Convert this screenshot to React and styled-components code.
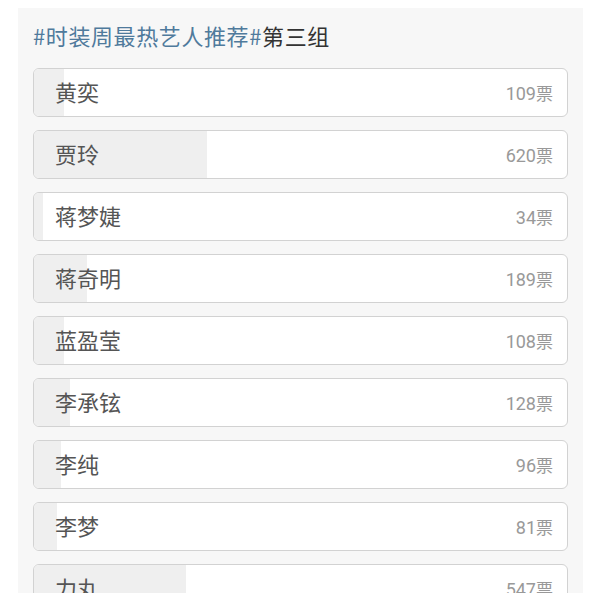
import React from 'react';
import styled, { createGlobalStyle } from 'styled-components';

const GlobalStyle = createGlobalStyle`
  html, body {
    margin: 0;
    padding: 0;
    background: #ffffff;
  }
  body {
    font-family: "Noto Sans CJK SC", "Noto Sans", sans-serif;
    overflow: hidden;
  }
`;

const Page = styled.div`
  padding: 8px 17px 0 18px;
  height: 593px;
  box-sizing: border-box;
`;

const Panel = styled.div`
  background: #f7f7f7;
  padding: 12px 15px 20px 15px;
  height: 100%;
  box-sizing: border-box;
`;

const Title = styled.div`
  font-size: 22px;
  line-height: 30px;
  color: #333333;
  margin-bottom: 18px;
  letter-spacing: 0.6px;
`;

const Topic = styled.span`
  color: #4f7a9c;
`;

const List = styled.div`
  display: flex;
  flex-direction: column;
  gap: 13px;
`;

const Row = styled.div`
  position: relative;
  height: 49px;
  border: 1px solid #d2d2d2;
  border-radius: 6px;
  background: #ffffff;
  overflow: hidden;
  display: flex;
  align-items: center;
  justify-content: space-between;
  padding: 0 14px 0 21px;
  box-sizing: border-box;
`;

const Fill = styled.div`
  position: absolute;
  left: 0;
  top: 0;
  bottom: 0;
  background: #efefef;
`;

const Name = styled.span`
  position: relative;
  font-size: 22px;
  color: #555555;
  margin-top: -3px;
`;

const Votes = styled.span`
  position: relative;
  font-size: 17px;
  color: #999999;
  margin-top: -1px;
`;

const Num = styled.span`
  font-family: Roboto, "Noto Sans", sans-serif;
  font-size: 18px;
`;

const items = [
  { name: '黄奕', votes: 109 },
  { name: '贾玲', votes: 620 },
  { name: '蒋梦婕', votes: 34 },
  { name: '蒋奇明', votes: 189 },
  { name: '蓝盈莹', votes: 108 },
  { name: '李承铉', votes: 128 },
  { name: '李纯', votes: 96 },
  { name: '李梦', votes: 81 },
  { name: '力丸', votes: 547 },
];

const total = items.reduce((s, i) => s + i.votes, 0);

export default function App() {
  return (
    <>
      <GlobalStyle />
      <Page>
        <Panel>
          <Title>
            <Topic>#时装周最热艺人推荐#</Topic>第三组
          </Title>
          <List>
            {items.map((item) => (
              <Row key={item.name}>
                <Fill style={{ width: `${(item.votes / total) * 100}%` }} />
                <Name>{item.name}</Name>
                <Votes>
                  <Num>{item.votes}</Num>票
                </Votes>
              </Row>
            ))}
          </List>
        </Panel>
      </Page>
    </>
  );
}
